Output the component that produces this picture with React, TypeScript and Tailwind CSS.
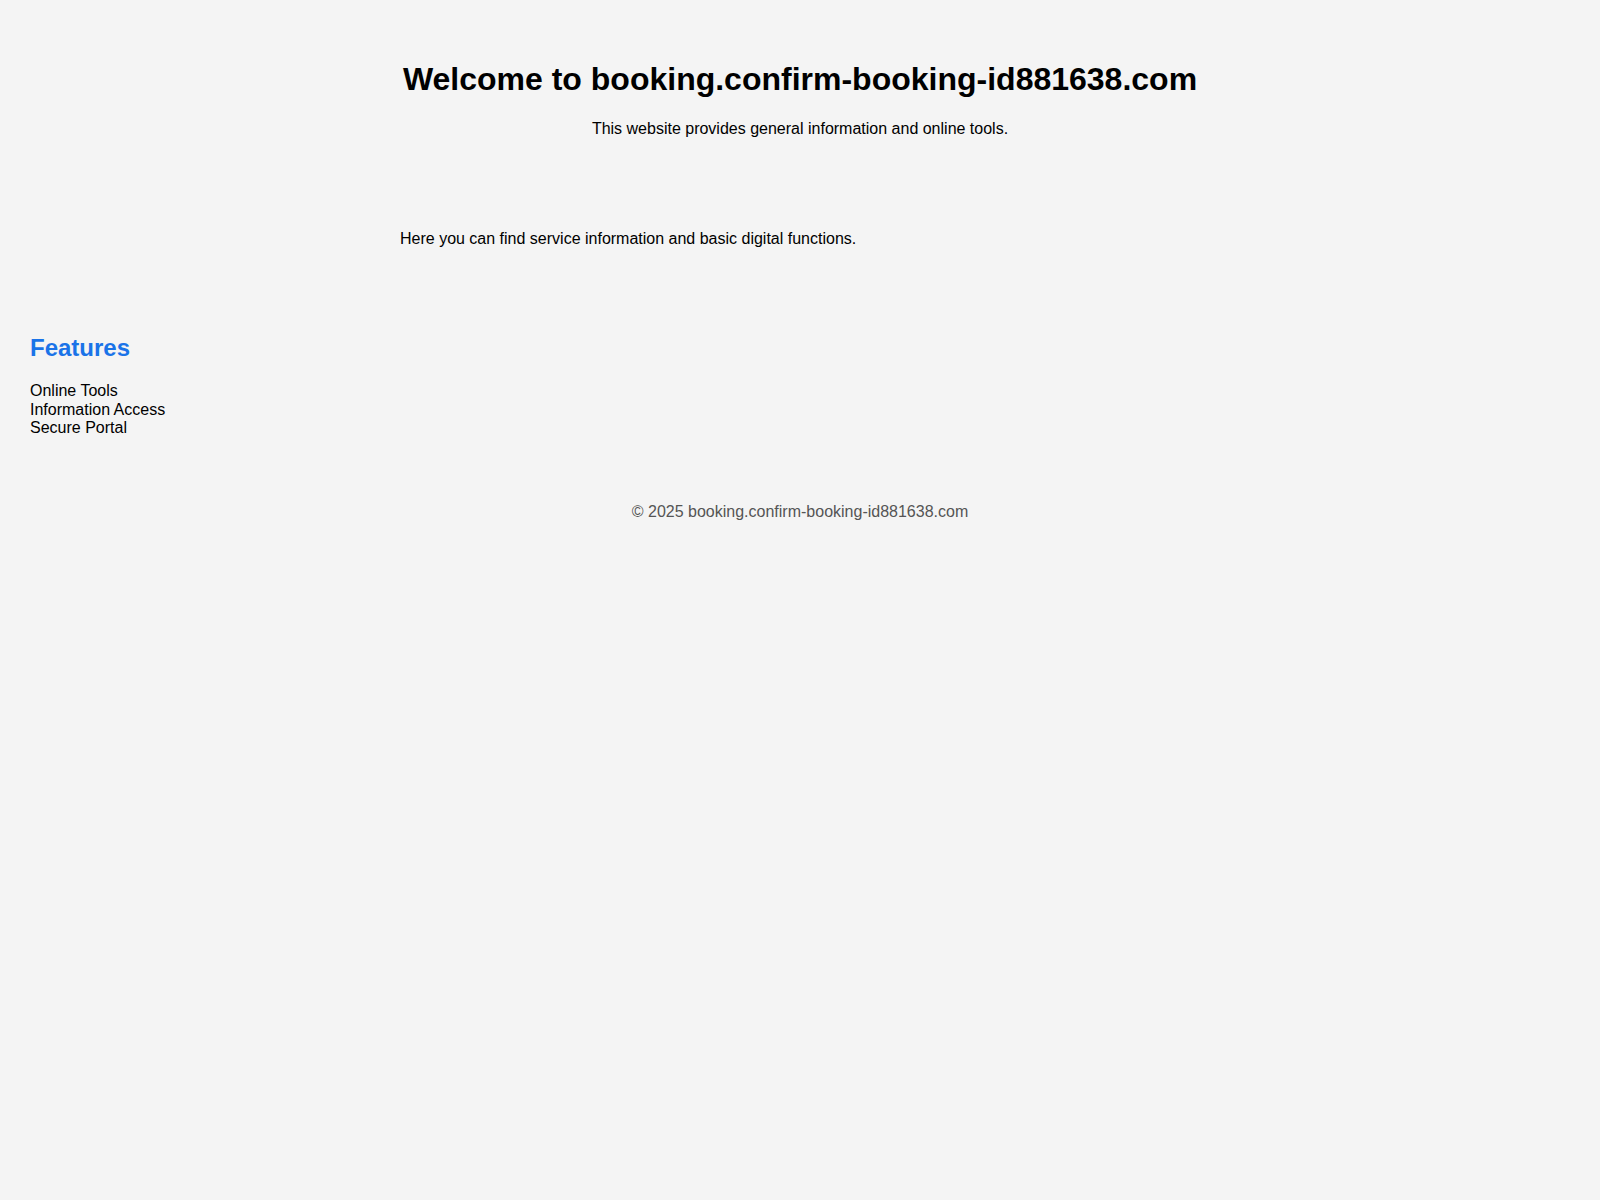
export default function App() {
  const features = ["Online Tools", "Information Access", "Secure Portal"];

  return (
    <div className="min-h-[1200px] bg-[#f4f4f4] text-black font-['Liberation_Sans',Arial,sans-serif] text-base leading-[1.15]">
      <header className="px-5 pt-10 pb-10 text-center">
        <h1 className="my-[21.44px] text-[32px] font-bold">
          Welcome to booking.confirm-booking-id881638.com
        </h1>
        <p className="mb-4">This website provides general information and online tools.</p>
      </header>

      <main className="mx-auto max-w-[800px] py-5">
        <p className="my-4">Here you can find service information and basic digital functions.</p>
      </main>

      <section className="px-[30px] pt-[28px] pb-[30px]">
        <h2 className="mt-[19.92px] mb-[18px] text-2xl font-bold text-[#1a73e8]">Features</h2>
        <ul className="mb-4">
          {features.map((f) => (
            <li key={f}>{f}</li>
          ))}
        </ul>
      </section>

      <footer className="pt-[19px] text-center text-[#555]">
        <p>© 2025 booking.confirm-booking-id881638.com</p>
      </footer>
    </div>
  );
}
